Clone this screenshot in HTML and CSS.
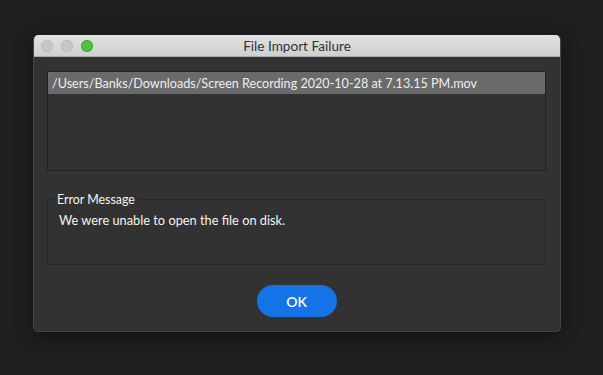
FILE: index.html
```html
<!DOCTYPE html>
<html lang="en">
<head>
    <meta charset="UTF-8">
    <title>File Import Failure</title>
    <link rel="stylesheet" href="styles.css">
</head>
<body>
    <div class="window">
        <div class="titlebar">
            <div class="lights">
                <span class="light"></span>
                <span class="light"></span>
                <span class="light green"></span>
            </div>
            <div class="title">File Import Failure</div>
        </div>

        <div class="content">
            <div class="file-list">
                <div class="file-row selected">/Users/Banks/Downloads/Screen Recording 2020-10-28 at 7.13.15 PM.mov</div>
            </div>

            <fieldset class="error-box">
                <legend>Error Message</legend>
                <p>We were unable to open the file on disk.</p>
            </fieldset>

            <div class="actions">
                <button class="ok-button">OK</button>
            </div>
        </div>
    </div>
</body>
</html>
```

FILE: styles.css
```css
body {
    margin: 0;
    padding: 0;
    width: 603px;
    height: 375px;
    overflow: hidden;
    background: #1f1f1f;
    font-family: 'Lato', 'Open Sans', sans-serif;
}

.window {
    margin: 35px 0 0 33px;
    width: 528px;
    height: 297px;
    box-sizing: border-box;
    background: #323232;
    border: 1px solid #454545;
    border-top: none;
    border-radius: 5px;
    overflow: hidden;
    display: flex;
    flex-direction: column;
    box-shadow: 0 4px 18px rgba(0, 0, 0, 0.45);
}

.titlebar {
    height: 22px;
    flex-shrink: 0;
    position: relative;
    display: flex;
    align-items: center;
    justify-content: center;
    background: linear-gradient(#e2e2e2, #cfcfcf);
    border-bottom: 1px solid #a9a9a9;
    box-sizing: border-box;
}

.lights {
    position: absolute;
    left: 7px;
    top: 5px;
    display: flex;
    gap: 8px;
}

.light {
    width: 12px;
    height: 12px;
    border-radius: 50%;
    background: #c6c6c6;
    box-shadow: inset 0 0 0 1px #bdbdbd;
}

.light.green {
    background: #4fc23d;
    box-shadow: inset 0 0 0 1px #44ad33;
}

.title {
    font-size: 13.6px;
    color: #333;
}

.content {
    flex: 1;
    padding: 14px 14px 14px 13px;
    display: flex;
    flex-direction: column;
}

.file-list {
    height: 100px;
    box-sizing: border-box;
    border: 1px solid #222;
    background: #323232;
}

.file-row {
    height: 22px;
    line-height: 23px;
    padding-left: 4px;
    font-size: 12.6px;
    color: #ededed;
    white-space: nowrap;
}

.file-row.selected {
    background: #6a6a6a;
}

.error-box {
    margin: 20px 0 0;
    height: 74px;
    box-sizing: border-box;
    padding: 0 8px 0 5px;
    border: 1px solid #262626;
}

.error-box legend {
    padding: 0 4px;
    font-size: 12.4px;
    line-height: 17px;
    color: #f4f4f4;
}

.error-box p {
    margin: 4px 0 0 6px;
    font-size: 12.8px;
    line-height: 16px;
    color: #f4f4f4;
}

.actions {
    margin-top: 20px;
    display: flex;
    justify-content: center;
}

.ok-button {
    width: 80px;
    height: 32px;
    border: none;
    border-radius: 16px;
    background: #1473e6;
    color: #fff;
    font-family: 'Lato', sans-serif;
    font-size: 14px;
    font-weight: 600;
    cursor: pointer;
}
```
